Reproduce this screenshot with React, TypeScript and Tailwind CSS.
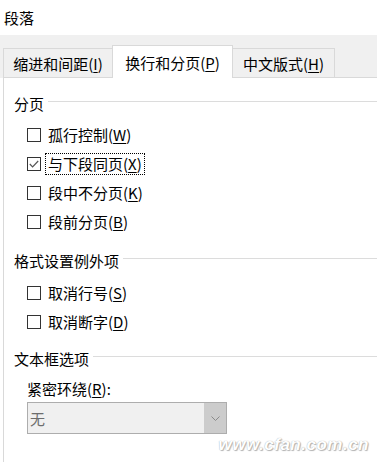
const font = { fontFamily: '"Noto Sans CJK SC", "Noto Sans", sans-serif' }

function App() {
  return (
    <div className="relative h-[462px] w-[377px] overflow-hidden bg-white text-[15px] text-black" style={font}>
      <div className="flex h-[35px] items-center pl-[4px] leading-none">段落</div>
      <div className="flex h-[43px] items-end bg-[#f0f0f0] pl-[3px]">
        <Tab label="缩进和间距" keyChar="I" width="w-[110px]" />
        <Tab label="换行和分页" keyChar="P" width="w-[121px]" active />
        <Tab label="中文版式" keyChar="H" width="w-[103px]" />
      </div>
      <div className="ml-[3px] h-full border-l border-t border-[#d9d9d9] -mt-px">
        <SectionHeader title="分页" className="mt-[15px]" />
        <div className="mt-[7px]">
          <CheckRow label="孤行控制" keyChar="W" />
          <CheckRow label="与下段同页" keyChar="X" checked focused />
          <CheckRow label="段中不分页" keyChar="K" />
          <CheckRow label="段前分页" keyChar="B" />
        </div>
        <SectionHeader title="格式设置例外项" className="mt-[14px]" />
        <div className="mt-[8px]">
          <CheckRow label="取消行号" keyChar="S" />
          <CheckRow label="取消断字" keyChar="D" />
        </div>
        <SectionHeader title="文本框选项" className="mt-[12px]" />
        <div className="mt-[10px] flex h-[20px] items-center pl-[23px] leading-none">
          紧密环绕(<span className="underline underline-offset-2">R</span>):
        </div>
        <div className="ml-[23px] mt-[4px] flex h-[32px] w-[200px] border border-[#adadad] bg-[#f0f0f0]">
          <div className="flex flex-1 items-center pl-[2px] leading-none text-[#6d6d6d]">无</div>
          <div className="flex w-[22px] items-center justify-center bg-[#cccccc]">
            <svg width="9" height="5" viewBox="0 0 9 5">
              <path d="M0.5 0.5 L4.5 4.5 L8.5 0.5" fill="none" stroke="#8a8a8a" strokeWidth="1" />
            </svg>
          </div>
        </div>
      </div>
      <div
        className="absolute bottom-[5px] right-[8px] text-[17px] font-bold italic tracking-[0.5px] text-white [text-shadow:0_0_1px_#9a9a9a,1px_1px_1px_#b5b5b5]"
        style={{ fontFamily: '"Liberation Sans", sans-serif' }}
      >
        www.cfan.com.cn
      </div>
    </div>
  )
}

export default App

const Tab = ({ label, keyChar, width, active }: { label: string; keyChar: string; width: string; active?: boolean }) => {
  return (
    <div
      className={`flex items-center justify-center border-x border-t border-[#d9d9d9] leading-none ${width} ${
        active ? 'relative z-10 h-[33px] -mx-px bg-white' : 'h-[30px] border-b'
      }`}
    >
      {label}(<span className="underline underline-offset-2">{keyChar}</span>)
    </div>
  )
}

const SectionHeader = ({ title, className }: { title: string; className: string }) => {
  return (
    <div className={`flex h-[20px] items-center gap-[4px] pl-[10px] leading-none ${className}`}>
      <span>{title}</span>
      <div className="-mt-[3px] h-px flex-1 bg-[#dcdcdc]" />
    </div>
  )
}

const CheckRow = ({ label, keyChar, checked, focused }: { label: string; keyChar: string; checked?: boolean; focused?: boolean }) => {
  return (
    <div className="flex h-[29px] items-center pl-[23px] leading-none">
      <div className="flex h-[14px] w-[14px] items-center justify-center border border-[#333333] bg-white">
        {checked && (
          <svg width="10" height="8" viewBox="0 0 10 8">
            <path d="M0.8 4 L3.6 6.8 L9.2 1" fill="none" stroke="#555555" strokeWidth="1.2" />
          </svg>
        )}
      </div>
      <div
        className={`ml-[4px] flex h-[22px] items-center px-[2px] ${
          focused ? 'border border-dotted border-black' : 'border border-transparent'
        }`}
      >
        {label}(<span className="underline underline-offset-2">{keyChar}</span>)
      </div>
    </div>
  )
}
